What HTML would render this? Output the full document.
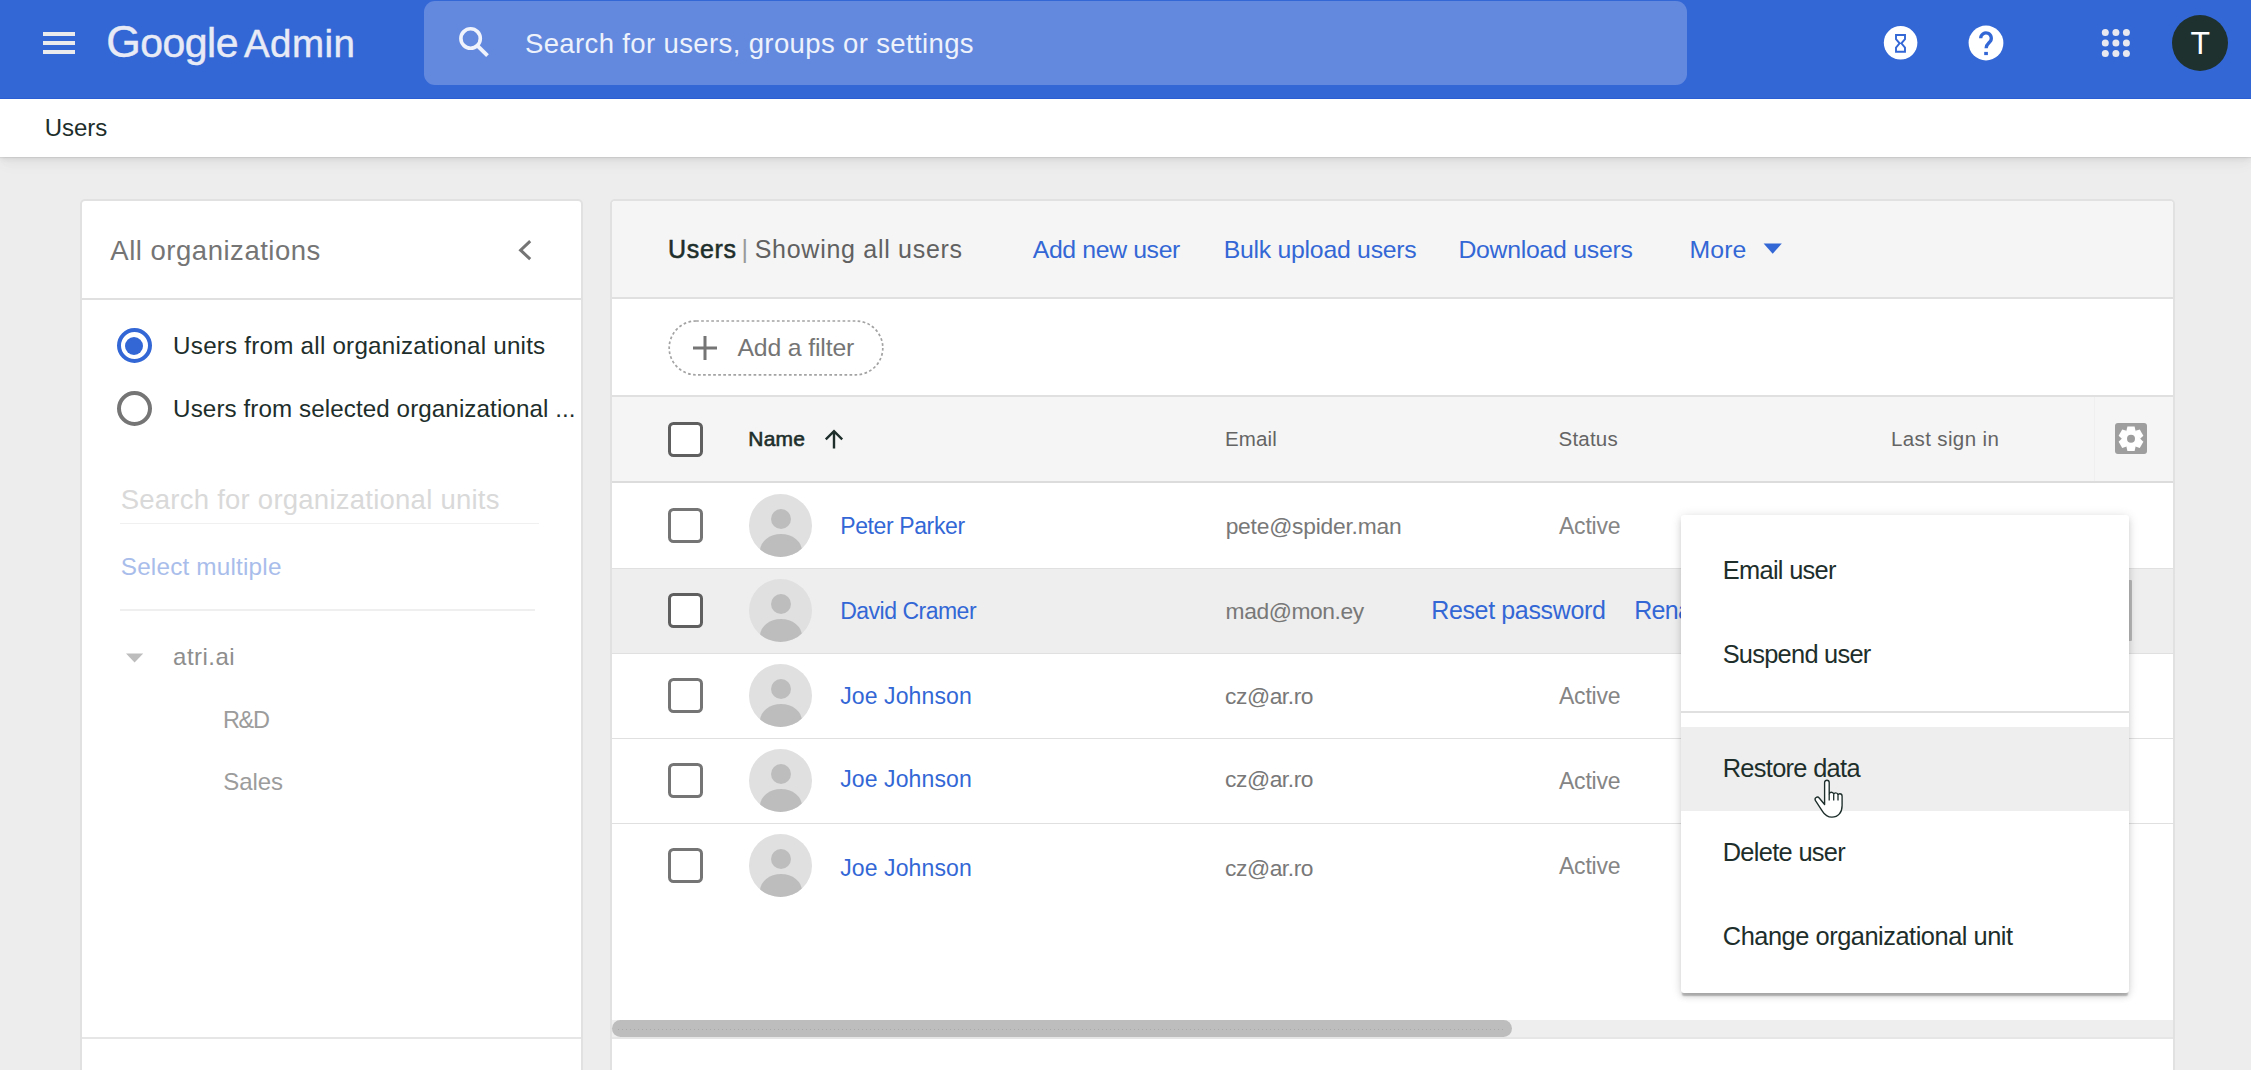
<!DOCTYPE html>
<html lang="en">
<head>
<meta charset="utf-8">
<title>Google Admin - Users</title>
<style>
*{box-sizing:border-box;margin:0;padding:0}
html,body{width:2251px;height:1070px;overflow:hidden;background:#ededed;font-family:"Liberation Sans",sans-serif}
#root{position:absolute;left:0;top:0;width:2251px;height:1070px;overflow:hidden}
.a{position:absolute}
.t{position:absolute;white-space:nowrap;line-height:1em;height:1em}
.hd{left:0;top:0;width:2251px;height:99px;background:#3367d6;border-bottom:1px solid #2a5dd4}
.sb{left:424px;top:1px;width:1263px;height:84px;border-radius:11px;background:#6389df}
.bar{left:43px;width:32px;height:4px;background:#ebebee}
.bc{left:0;top:99px;width:2251px;height:58px;background:#fff;box-shadow:0 1px 1px rgba(0,0,0,.07),0 3px 5px rgba(0,0,0,.045),0 7px 10px rgba(0,0,0,.03),0 10px 16px rgba(0,0,0,.02)}
.lp{left:80px;top:199px;width:503px;height:900px;background:#fff;border:2px solid #e1e1e1;border-radius:5px}
.mp{left:610px;top:199px;width:1565px;height:900px;background:#fff;border:2px solid #e1e1e1;border-radius:5px;overflow:hidden}
.ln{background:#e0e0e0;height:2px}
.cb{left:668px;width:35px;height:35px;border:3.4px solid #757575;border-radius:5.5px;background:#fff}
.av{left:749px;width:63px;height:63px;border-radius:50%;background:#e0e0e0;overflow:hidden}
.av i{position:absolute;display:block;background:#bdbdbd;border-radius:50%}
.av i.h{left:21.5px;top:14.5px;width:20px;height:20px}
.av i.s{left:10.5px;top:40px;width:42px;height:34px}
.pop{left:1681px;top:515px;width:448px;height:478px;background:#fff;border-radius:3px;z-index:10;
 box-shadow:0 4px 1.5px -1px rgba(0,0,0,.23),0 4px 6px 0 rgba(0,0,0,.10),0 1px 11px 0 rgba(0,0,0,.12)}
</style>
</head>
<body>
<div id="root">

<!-- header -->
<div class="a hd"></div>
<div class="a sb"></div>
<div class="a bar" style="top:32px"></div>
<div class="a bar" style="top:41px"></div>
<div class="a bar" style="top:50px"></div>
<svg class="a" style="left:455px;top:23px" width="40" height="40" viewBox="0 0 40 40"><circle cx="15.6" cy="15.5" r="9.7" fill="none" stroke="#f0f3fb" stroke-width="3.6"/><path d="M22.6 22.8 L32.5 32.7" stroke="#f0f3fb" stroke-width="3.8" fill="none"/></svg>

<!-- hourglass -->
<svg class="a" style="left:1883px;top:25px" width="36" height="36" viewBox="0 0 36 36"><circle cx="17.6" cy="17.8" r="16.8" fill="#fff"/><path d="M13 9.95h9v4.1l-3.6 4.27 3.6 4.27v4.1H13v-4.1l3.6-4.27-3.6-4.27z" fill="none" stroke="#3367d6" stroke-width="1.9" stroke-linejoin="miter"/></svg>
<!-- help -->
<svg class="a" style="left:1968px;top:25px" width="36" height="36" viewBox="0 0 36 36"><circle cx="18" cy="18" r="17.4" fill="#fff"/><path d="M12.7 13.2a5.300 5.300 0 1 1 9.100 3.700c-1.900 1.900-3.700 3-3.700 6.300" fill="none" stroke="#3367d6" stroke-width="3.3"/><rect x="16.2" y="26.9" width="3.7" height="3.200" fill="#3367d6"/></svg>
<!-- apps grid -->
<svg class="a" style="left:2100px;top:27px" width="32" height="32" viewBox="0 0 32 32" fill="#e8e9f0"><circle cx="5.3" cy="5.5" r="3.5"/><circle cx="15.9" cy="5.5" r="3.5"/><circle cx="26.4" cy="5.5" r="3.5"/><circle cx="5.3" cy="16" r="3.5"/><circle cx="15.9" cy="16" r="3.5"/><circle cx="26.4" cy="16" r="3.5"/><circle cx="5.3" cy="26.5" r="3.5"/><circle cx="15.9" cy="26.5" r="3.5"/><circle cx="26.4" cy="26.5" r="3.5"/></svg>
<!-- avatar -->
<div class="a" style="left:2172px;top:15px;width:56px;height:56px;border-radius:50%;background:#1e312e"></div>

<!-- breadcrumb -->
<div class="a bc"></div>

<!-- left panel -->
<div class="a lp"></div>
<div class="a ln" style="left:82px;top:298px;width:499px"></div>
<svg class="a" style="left:512px;top:236px" width="28" height="28" viewBox="0 0 28 28"><path d="M18.2 5.2 L8.6 14.2 L18.2 23.2" fill="none" stroke="#757575" stroke-width="3"/></svg>
<div class="a" style="left:117px;top:328px;width:35px;height:35px;border-radius:50%;border:4px solid #3367d6;background:#fff"></div>
<div class="a" style="left:124.8px;top:336.5px;width:18px;height:18px;border-radius:50%;background:#3367d6"></div>
<div class="a" style="left:117px;top:391px;width:35px;height:35px;border-radius:50%;border:4px solid #757575;background:#fff"></div>
<div class="a" style="left:120px;top:523px;width:419px;height:1px;background:#f0f0f0"></div>
<div class="a" style="left:120px;top:609px;width:415px;height:2px;background:#efefef"></div>
<svg class="a" style="left:124px;top:651px" width="22" height="14" viewBox="0 0 22 14"><path d="M2 2.5h17.2L10.6 11.6z" fill="#bdbdbd"/></svg>
<div class="a" style="left:82px;top:1037px;width:499px;height:1.5px;background:#e6e6e6"></div>

<!-- main panel -->
<div class="a mp"></div>
<div class="a" style="left:612px;top:201px;width:1561px;height:96px;background:#f5f5f5;border-radius:3px 3px 0 0"></div>
<div class="a ln" style="left:612px;top:297px;width:1561px"></div>
<div class="a ln" style="left:612px;top:395px;width:1561px"></div>
<div class="a" style="left:612px;top:397px;width:1561px;height:84px;background:#f5f5f5"></div>
<div class="a ln" style="left:612px;top:481px;width:1561px;background:#dcdcdc"></div>
<div class="a" style="left:2094px;top:397px;width:1px;height:84px;background:#efefef"></div>
<!-- More caret -->
<svg class="a" style="left:1762px;top:242px" width="22" height="14" viewBox="0 0 22 14"><path d="M1.6 1.6h18.2L10.7 11.8z" fill="#3367d6"/></svg>
<!-- filter pill -->
<svg class="a" style="left:666px;top:318px" width="220" height="60" viewBox="0 0 220 60"><rect x="3.2" y="3" width="213.6" height="53.8" rx="26.9" fill="#fff" stroke="#a3a3a3" stroke-width="1.7" stroke-dasharray="2.7 2.35"/></svg>
<svg class="a" style="left:691px;top:334px" width="28" height="28" viewBox="0 0 28 28"><path d="M14 2v24M2 14h24" stroke="#757575" stroke-width="3" fill="none"/></svg>
<!-- header checkbox / arrow / gear -->
<div class="a cb" style="top:422px;border-color:#5f5f5f"></div>
<svg class="a" style="left:822px;top:427px" width="24" height="24" viewBox="0 0 24 24"><path d="M12 21.5V4.5M3.8 12.3 12 4.2l8.2 8.1" fill="none" stroke="#1d2e2b" stroke-width="2.4"/></svg>
<svg class="a" style="left:2115px;top:423px" width="32" height="31" viewBox="0 0 32 31"><rect x="0" y="0" width="32" height="31" rx="3" fill="#9e9e9e"/><g transform="translate(16 15.7)" fill="#fff"><path id="gt" d="M-3.6 -12.2h7.2l1 4.4h-9.2z"/><use href="#gt" transform="rotate(60)"/><use href="#gt" transform="rotate(120)"/><use href="#gt" transform="rotate(180)"/><use href="#gt" transform="rotate(240)"/><use href="#gt" transform="rotate(300)"/><circle r="9.1"/><circle r="4" fill="#9e9e9e"/></g></svg>

<!-- rows -->
<div class="a" style="left:612px;top:569px;width:1561px;height:84px;background:#eeeeee"></div>
<div class="a" style="left:612px;top:568px;width:1561px;height:1px;background:#e0e0e0"></div>
<div class="a" style="left:612px;top:653px;width:1561px;height:1px;background:#e0e0e0"></div>
<div class="a" style="left:612px;top:738px;width:1561px;height:1px;background:#e0e0e0"></div>
<div class="a" style="left:612px;top:823px;width:1561px;height:1px;background:#e0e0e0"></div>
<div class="a" style="left:2129px;top:580px;width:2.5px;height:61px;background:#b8b8b8;border-radius:0 1px 1px 0"></div>

<div class="a cb" style="top:508px"></div>
<div class="a cb" style="top:593px;border-color:#5f5f5f"></div>
<div class="a cb" style="top:678px"></div>
<div class="a cb" style="top:763px"></div>
<div class="a cb" style="top:848px"></div>
<div class="a av" style="top:494px"><i class="h"></i><i class="s"></i></div>
<div class="a av" style="top:579px"><i class="h"></i><i class="s"></i></div>
<div class="a av" style="top:664px"><i class="h"></i><i class="s"></i></div>
<div class="a av" style="top:749px"><i class="h"></i><i class="s"></i></div>
<div class="a av" style="top:834px"><i class="h"></i><i class="s"></i></div>

<!-- scrollbar -->
<div class="a" style="left:612px;top:1020px;width:1561px;height:17px;background:#eeeeee"></div>
<div class="a" style="left:612px;top:1020px;width:900px;height:17px;border-radius:8.5px;background:#bdbdbd"></div>
<div class="a" style="left:612px;top:1037px;width:1561px;height:1.5px;background:#e6e6e6"></div>
<div class="a" style="left:618px;top:1028.5px;width:888px;height:1px;background:repeating-linear-gradient(90deg,#a9a9a9 0,#a9a9a9 1px,transparent 1px,transparent 4px)"></div>

<!-- popup -->
<div class="a pop"></div>
<div class="a" style="left:1681px;top:710.5px;width:448px;height:2px;background:#e0e0e0;z-index:11"></div>
<div class="a" style="left:1681px;top:727px;width:448px;height:84px;background:#eeeeee;z-index:11"></div>

<span class="t" style="left:106.18px;top:20px;font-size:44.5px;color:#e8ebf5;font-weight:400;letter-spacing:0.000px;-webkit-text-stroke:0.45px #e8ebf5;">G</span>
<span class="t" style="left:140.29px;top:23px;font-size:41px;color:#e8ebf5;font-weight:400;letter-spacing:-0.527px;-webkit-text-stroke:0.45px #e8ebf5;">oogle</span>
<span class="t" style="left:243.95px;top:25px;font-size:38.5px;color:#e8ebf5;font-weight:400;letter-spacing:0.482px;-webkit-text-stroke:0.45px #e8ebf5;">Admin</span>
<span class="t" style="left:524.97px;top:30px;font-size:27.5px;color:#eef2fb;font-weight:400;letter-spacing:0.372px;">Search for users, groups or settings</span>
<span class="t" style="left:2190.42px;top:27px;font-size:32px;color:#ffffff;font-weight:400;letter-spacing:0.000px;">T</span>
<span class="t" style="left:44.82px;top:116px;font-size:24px;color:#1d2e2b;font-weight:400;letter-spacing:-0.085px;">Users</span>
<span class="t" style="left:110.28px;top:237px;font-size:27.5px;color:#757575;font-weight:400;letter-spacing:0.520px;">All organizations</span>
<span class="t" style="left:173.12px;top:334px;font-size:24.2px;color:#1d2e2b;font-weight:400;letter-spacing:0.229px;">Users from all organizational units</span>
<span class="t" style="left:173.12px;top:397px;font-size:24.2px;color:#1d2e2b;font-weight:400;letter-spacing:0.086px;">Users from selected organizational ...</span>
<span class="t" style="left:120.67px;top:486px;font-size:27.5px;color:#d9d9d9;font-weight:400;letter-spacing:0.244px;">Search for organizational units</span>
<span class="t" style="left:120.78px;top:555px;font-size:24.3px;color:#a9bdeb;font-weight:400;letter-spacing:0.190px;">Select multiple</span>
<span class="t" style="left:173.10px;top:645px;font-size:24px;color:#8e8e8e;font-weight:400;letter-spacing:0.455px;">atri.ai</span>
<span class="t" style="left:222.97px;top:709px;font-size:23.5px;color:#9c9c9c;font-weight:400;letter-spacing:-1.355px;">R&amp;D</span>
<span class="t" style="left:223.28px;top:770px;font-size:24px;color:#9c9c9c;font-weight:400;letter-spacing:-0.066px;">Sales</span>
<span class="t" style="left:668.07px;top:237px;font-size:25px;color:#1d2e2b;font-weight:400;letter-spacing:0.694px;-webkit-text-stroke:0.55px #1d2e2b;">Users</span>
<span class="t" style="left:741.41px;top:237px;font-size:25px;color:#9a9a9a;font-weight:400;letter-spacing:0.000px;">|</span>
<span class="t" style="left:754.74px;top:237px;font-size:25px;color:#616161;font-weight:400;letter-spacing:0.714px;">Showing all users</span>
<span class="t" style="left:1032.78px;top:238px;font-size:24.8px;color:#3367d6;font-weight:400;letter-spacing:-0.370px;">Add new user</span>
<span class="t" style="left:1223.70px;top:238px;font-size:24.8px;color:#3367d6;font-weight:400;letter-spacing:-0.255px;">Bulk upload users</span>
<span class="t" style="left:1458.40px;top:238px;font-size:24.8px;color:#3367d6;font-weight:400;letter-spacing:-0.252px;">Download users</span>
<span class="t" style="left:1689.60px;top:238px;font-size:24.8px;color:#3367d6;font-weight:400;letter-spacing:0.106px;">More</span>
<span class="t" style="left:737.38px;top:336px;font-size:24.8px;color:#757575;font-weight:400;letter-spacing:-0.143px;">Add a filter</span>
<span class="t" style="left:748.32px;top:428px;font-size:21px;color:#1d2e2b;font-weight:400;letter-spacing:0.168px;-webkit-text-stroke:0.6px #1d2e2b;">Name</span>
<span class="t" style="left:1225.05px;top:429px;font-size:20.5px;color:#646464;font-weight:400;letter-spacing:0.096px;">Email</span>
<span class="t" style="left:1558.58px;top:429px;font-size:20.5px;color:#646464;font-weight:400;letter-spacing:0.187px;">Status</span>
<span class="t" style="left:1890.95px;top:429px;font-size:20.5px;color:#646464;font-weight:400;letter-spacing:0.380px;">Last sign in</span>
<span class="t" style="left:840.19px;top:515px;font-size:23px;color:#3367d6;font-weight:400;letter-spacing:-0.383px;">Peter Parker</span>
<span class="t" style="left:1225.65px;top:515px;font-size:22.8px;color:#787878;font-weight:400;letter-spacing:-0.219px;">pete@spider.man</span>
<span class="t" style="left:840.19px;top:600px;font-size:23px;color:#3367d6;font-weight:400;letter-spacing:-0.500px;">David Cramer</span>
<span class="t" style="left:1225.59px;top:600px;font-size:22.8px;color:#787878;font-weight:400;letter-spacing:-0.417px;">mad@mon.ey</span>
<span class="t" style="left:840.19px;top:685px;font-size:23px;color:#3367d6;font-weight:400;letter-spacing:0.110px;">Joe Johnson</span>
<span class="t" style="left:1225.03px;top:685px;font-size:22.8px;color:#787878;font-weight:400;letter-spacing:-0.442px;">cz@ar.ro</span>
<span class="t" style="left:840.19px;top:768px;font-size:23px;color:#3367d6;font-weight:400;letter-spacing:0.110px;">Joe Johnson</span>
<span class="t" style="left:1225.03px;top:768px;font-size:22.8px;color:#787878;font-weight:400;letter-spacing:-0.442px;">cz@ar.ro</span>
<span class="t" style="left:840.19px;top:857px;font-size:23px;color:#3367d6;font-weight:400;letter-spacing:0.110px;">Joe Johnson</span>
<span class="t" style="left:1225.03px;top:857px;font-size:22.8px;color:#787878;font-weight:400;letter-spacing:-0.442px;">cz@ar.ro</span>
<span class="t" style="left:1558.98px;top:515px;font-size:23px;color:#858585;font-weight:400;letter-spacing:-0.210px;">Active</span>
<span class="t" style="left:1558.98px;top:685px;font-size:23px;color:#858585;font-weight:400;letter-spacing:-0.210px;">Active</span>
<span class="t" style="left:1558.98px;top:770px;font-size:23px;color:#858585;font-weight:400;letter-spacing:-0.210px;">Active</span>
<span class="t" style="left:1558.98px;top:855px;font-size:23px;color:#858585;font-weight:400;letter-spacing:-0.210px;">Active</span>
<span class="t" style="left:1431.20px;top:598px;font-size:25px;color:#3367d6;font-weight:400;letter-spacing:-0.354px;">Reset password</span>
<span class="t" style="left:1634.20px;top:598px;font-size:25px;color:#3367d6;font-weight:400;letter-spacing:-0.693px;">Rename user</span>
<span class="t" style="left:1722.80px;top:558px;font-size:25.4px;color:#1d2e2b;font-weight:400;letter-spacing:-0.700px;z-index:20;">Email user</span>
<span class="t" style="left:1722.64px;top:642px;font-size:25.4px;color:#1d2e2b;font-weight:400;letter-spacing:-0.726px;z-index:20;">Suspend user</span>
<span class="t" style="left:1722.70px;top:756px;font-size:25.4px;color:#1d2e2b;font-weight:400;letter-spacing:-0.686px;z-index:20;">Restore data</span>
<span class="t" style="left:1722.70px;top:840px;font-size:25.4px;color:#1d2e2b;font-weight:400;letter-spacing:-0.680px;z-index:20;">Delete user</span>
<span class="t" style="left:1722.82px;top:924px;font-size:25.4px;color:#1d2e2b;font-weight:400;letter-spacing:-0.473px;z-index:20;">Change organizational unit</span>

<!-- cursor -->
<svg class="a" style="left:1812.8px;top:779px;z-index:30" width="34" height="42" viewBox="0 0 34 42"><path d="M11.6 3.6c0-1.5 1.1-2.4 2.3-2.4s2.3.9 2.3 2.4v11.2c.3-1 1.2-1.6 2.2-1.6 1.200 0 2.100.8 2.300 2 .3-.8 1.100-1.300 2-1.300 1.200 0 2.100.8 2.300 2 .3-.7 1-1.100 1.800-1.100 1.300 0 2.300 1 2.300 2.400v9.200c0 7-3.800 11.800-10.200 11.800-4.400 0-7-1.900-9.400-5.800L2.500 21.700c-.7-1.200-.4-2.500.6-3.200 1-.7 2.400-.4 3.300.7l5.200 6.300z" fill="#fff" stroke="#1d2e2b" stroke-width="1.35" stroke-linejoin="round"/><path d="M16.2 15v6.500M20.700 15.500v6M25 16.300v5.200" stroke="#1d2e2b" stroke-width="1.3" fill="none"/></svg>

</div>
</body>
</html>
